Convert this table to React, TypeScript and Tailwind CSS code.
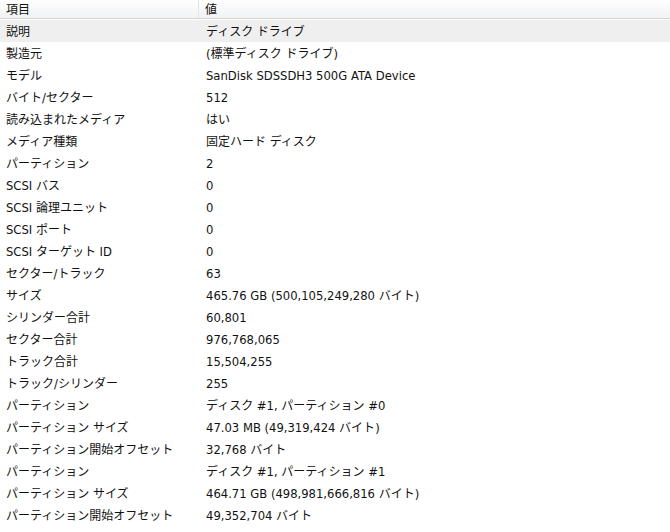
import React from "react";

const rows: [string, string][] = [
  ["説明", "ディスク ドライブ"],
  ["製造元", "(標準ディスク ドライブ)"],
  ["モデル", "SanDisk SDSSDH3 500G ATA Device"],
  ["バイト/セクター", "512"],
  ["読み込まれたメディア", "はい"],
  ["メディア種類", "固定ハード ディスク"],
  ["パーティション", "2"],
  ["SCSI バス", "0"],
  ["SCSI 論理ユニット", "0"],
  ["SCSI ポート", "0"],
  ["SCSI ターゲット ID", "0"],
  ["セクター/トラック", "63"],
  ["サイズ", "465.76 GB (500,105,249,280 バイト)"],
  ["シリンダー合計", "60,801"],
  ["セクター合計", "976,768,065"],
  ["トラック合計", "15,504,255"],
  ["トラック/シリンダー", "255"],
  ["パーティション", "ディスク #1, パーティション #0"],
  ["パーティション サイズ", "47.03 MB (49,319,424 バイト)"],
  ["パーティション開始オフセット", "32,768 バイト"],
  ["パーティション", "ディスク #1, パーティション #1"],
  ["パーティション サイズ", "464.71 GB (498,981,666,816 バイト)"],
  ["パーティション開始オフセット", "49,352,704 バイト"],
];

function Mixed({ text }: { text: string }) {
  const parts = text.match(/[\x20-\x7e]+|[^\x20-\x7e]+/g) || [];
  return (
    <>
      {parts.map((p, i) =>
        /^[\x20-\x7e]+$/.test(p) ? (
          <span
            key={i}
            className="text-[11.6px]"
            style={{ fontFamily: '"DejaVu Sans", sans-serif' }}
          >
            {p}
          </span>
        ) : (
          <span key={i}>{p}</span>
        )
      )}
    </>
  );
}

export default function App() {
  return (
    <div
      className="w-[670px] h-[532px] bg-white overflow-hidden text-[12px] text-[#111111]"
      style={{ fontFamily: '"Noto Sans CJK JP", "Noto Sans", sans-serif' }}
    >
      <div className="flex h-[19px] border-b border-[#d5d5d5] bg-gradient-to-b from-white to-[#f1f2f4] leading-[18px]">
        <div className="w-[199px] pl-[6px] border-r border-[#e3e4e6]">項目</div>
        <div className="flex-1 pl-[6px]">値</div>
      </div>
      <div className="pt-px">
        {rows.map(([k, v], i) => (
          <div
            key={i}
            className={`flex h-[22px] leading-[22px] ${i === 0 ? "bg-[#efefef]" : ""}`}
          >
            <div className="w-[200px] pl-[6px] whitespace-nowrap">
              <Mixed text={k} />
            </div>
            <div className="flex-1 pl-[6px] whitespace-nowrap">
              <Mixed text={v} />
            </div>
          </div>
        ))}
      </div>
    </div>
  );
}
